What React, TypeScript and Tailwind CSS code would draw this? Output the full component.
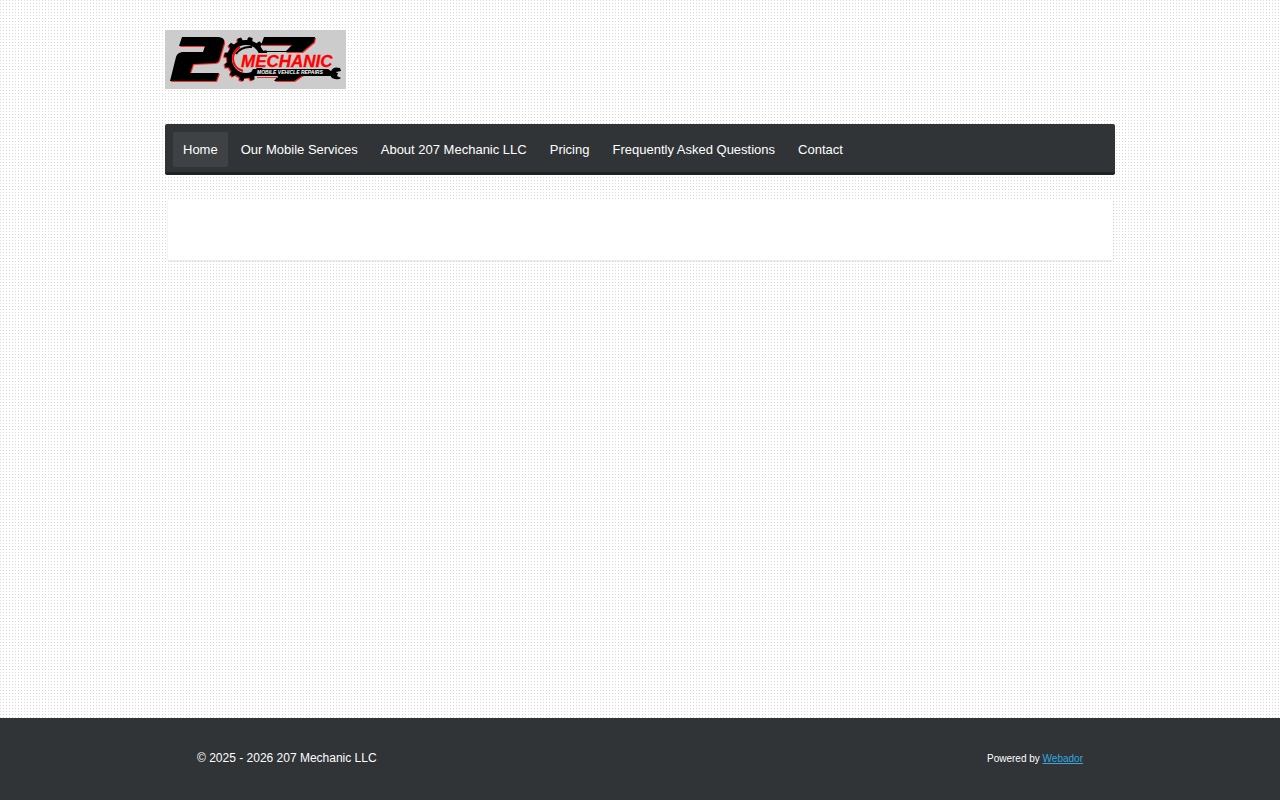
import React from 'react';

interface NavItem {
    label: string;
    href: string;
}

const navItems: NavItem[] = [
    { label: 'Home', href: '#home' },
    { label: 'Our Mobile Services', href: '#services' },
    { label: 'About 207 Mechanic LLC', href: '#about' },
    { label: 'Pricing', href: '#pricing' },
    { label: 'Frequently Asked Questions', href: '#faq' },
    { label: 'Contact', href: '#contact' },
];

const teeth = [0, 30, 60, 90, 120, 150, 180, 210, 240, 270, 300, 330];

const Two = () => (
    <path d="M17 7H53Q60 7 59 13L54 30Q53 33 49 33L28 34L25 43H54L51 51H5L11 27Q12 23 17 22L38 22L40 16H14Z" />
);

const Seven = () => (
    <>
        <path d="M99 7H150L149 12L137 22H120L127 15H96Z" />
        <path d="M114 45H138L129 51H109Z" />
    </>
);

const Gear = () => (
    <>
        <circle cx="81" cy="29" r="16" fill="none" stroke="currentColor" strokeWidth="6" />
        {teeth.map((angle) => (
            <path key={angle} d="M79 7H83L84 13H78Z" transform={`rotate(${angle + 12} 81 29)`} />
        ))}
    </>
);

const Logo = () => (
    <svg viewBox="0 0 181 59" className="block h-[59px] w-[181px]" role="img" aria-label="207 Mechanic">
        <rect width="181" height="59" fill="#cccccc" />
        <g fill="#ff2a25" className="text-[#ff2a25]" transform="translate(1 1)">
            <Two />
            <Seven />
        </g>
        <g fill="#ff2a25" className="text-[#ff2a25]" transform="translate(-1 1)">
            <Gear />
        </g>
        <g fill="#000000" className="text-black">
            <Two />
            <Seven />
            <Gear />
        </g>
        <circle cx="81" cy="29" r="14" fill="#cccccc" />
        <path d="M78 41Q68 38 68 28Q69 20 75 17" fill="none" stroke="#ff0000" strokeWidth="2" />
        <path d="M71 24Q76 16 87 17" fill="none" stroke="#000000" strokeWidth="2" />
        <path d="M80 23H168L160 38H74Z" fill="#cccccc" />
        <path d="M98 21.5H137" stroke="#000000" strokeWidth="1" />
        <text
            x="76"
            y="37"
            fill="#ff0000"
            stroke="#ff0000"
            strokeWidth="0.3"
            className="font-['Liberation_Sans'] text-[17px] font-bold italic"
        >
            MECHANIC
        </text>
        <path d="M88 39H163L166 41L173 43L172 46L164 46H84Z" fill="#000000" />
        <path d="M92 47.5H113" stroke="#ff2a25" strokeWidth="1" />
        <path d="M175 38Q167 36 166 42Q164 48 170 49Q174 50 176 48L172 46L171 42L176 41Z" fill="#000000" />
        <text x="92" y="44" fill="#ffffff" className="font-['Liberation_Sans'] text-[5px] font-bold italic">
            MOBILE VEHICLE REPAIRS
        </text>
    </svg>
);

const App: React.FC = () => {
    return (
        <div className="flex min-h-screen flex-col bg-white bg-[conic-gradient(from_270deg_at_1px_1px,#d9d9d9_90deg,transparent_0)] bg-size-[3px_3px] font-['Liberation_Sans',Arial,sans-serif] text-white">
            <div className="mx-auto w-full max-w-[950px] grow">
                <header className="pt-[30px] pb-[35px]">
                    <a href="#home" className="inline-block align-top">
                        <Logo />
                    </a>
                </header>
                <nav className="rounded-xs border-b-3 border-[#212425] bg-[#303436] p-2 pb-[5px]">
                    <ul className="flex flex-wrap gap-[3px]">
                        {navItems.map((item, index) => (
                            <li key={item.label}>
                                <a
                                    href={item.href}
                                    className={`block rounded-xs px-[10px] text-[13px] leading-[35px] ${index === 0 ? 'bg-[#3e4245]' : ''}`}
                                >
                                    {item.label}
                                </a>
                            </li>
                        ))}
                    </ul>
                </nav>
                <main className="mt-[25px] mr-[2px] ml-[3px] h-[60px] bg-white shadow-[0_1px_2px_rgba(0,0,0,0.12)]" />
            </div>
            <footer className="bg-[#303436]">
                <div className="mx-auto flex max-w-[950px] items-start justify-between px-8 py-[31px]">
                    <p className="text-xs leading-[18px]">© 2025 - 2026 207 Mechanic LLC</p>
                    <p className="text-[10px] leading-5">
                        Powered by{' '}
                        <a href="#webador" className="text-[#35a8e0] underline">
                            Webador
                        </a>
                    </p>
                </div>
            </footer>
        </div>
    );
};

export default App;
